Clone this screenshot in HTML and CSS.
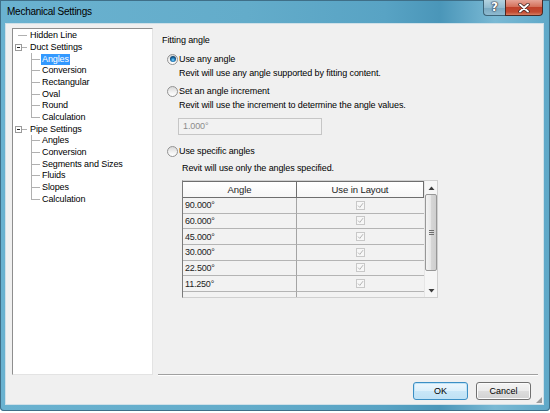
FILE: index.html
```html
<!DOCTYPE html>
<html>
<head>
<meta charset="utf-8">
<link rel="stylesheet" href="styles.css">
</head>
<body>
<div class="window">
  <div class="titlebar">
    <span class="title">Mechanical Settings</span>
    <div class="caption">
      <div class="cap-help">?</div>
      <div class="cap-close">
        <svg width="14" height="10" viewBox="0 0 14 10"><path d="M3 1.5 L11 8.5 M11 1.5 L3 8.5" stroke="#3a2020" stroke-width="3.4" stroke-linecap="round"/><path d="M3 1.5 L11 8.5 M11 1.5 L3 8.5" stroke="#fff" stroke-width="1.9" stroke-linecap="round"/></svg>
      </div>
    </div>
  </div>
  <div class="client">
    <div class="main">
      <div class="tree">
        <div class="trow root leaf"><span class="gut"></span><span class="lbl">Hidden Line</span></div>
        <div class="trow root"><span class="gut"><span class="exp"></span></span><span class="lbl">Duct Settings</span></div>
        <div class="trow child"><span class="gut"></span><span class="lbl sel">Angles</span></div>
        <div class="trow child"><span class="gut"></span><span class="lbl">Conversion</span></div>
        <div class="trow child"><span class="gut"></span><span class="lbl">Rectangular</span></div>
        <div class="trow child"><span class="gut"></span><span class="lbl">Oval</span></div>
        <div class="trow child"><span class="gut"></span><span class="lbl">Round</span></div>
        <div class="trow child last"><span class="gut"></span><span class="lbl">Calculation</span></div>
        <div class="trow root"><span class="gut"><span class="exp"></span></span><span class="lbl">Pipe Settings</span></div>
        <div class="trow child"><span class="gut"></span><span class="lbl">Angles</span></div>
        <div class="trow child"><span class="gut"></span><span class="lbl">Conversion</span></div>
        <div class="trow child"><span class="gut"></span><span class="lbl">Segments and Sizes</span></div>
        <div class="trow child"><span class="gut"></span><span class="lbl">Fluids</span></div>
        <div class="trow child"><span class="gut"></span><span class="lbl">Slopes</span></div>
        <div class="trow child last"><span class="gut"></span><span class="lbl">Calculation</span></div>
      </div>
      <div class="panel">
        <div class="heading">Fitting angle</div>
        <div class="opt o1"><span class="radio on"></span><span>Use any angle</span></div>
        <div class="desc">Revit will use any angle supported by fitting content.</div>
        <div class="opt o2"><span class="radio"></span><span>Set an angle increment</span></div>
        <div class="desc">Revit will use the increment to determine the angle values.</div>
        <div class="input">1.000°</div>
        <div class="opt o3"><span class="radio"></span><span>Use specific angles</span></div>
        <div class="desc d3">Revit will use only the angles specified.</div>
        <div class="grid">
          <div class="table">
            <div class="hrow">
              <div class="hcell c1">Angle</div>
              <div class="hcell c2">Use in Layout</div>
            </div>
            <div class="row"><div class="cell c1">90.000°</div><div class="cell c2"><span class="chk"><svg width="7" height="7" viewBox="0 0 7 7"><path d="M1 3.6 L2.8 5.4 L6 1.2" fill="none" stroke="#b4b4b4" stroke-width="1"/></svg></span></div></div>
            <div class="row"><div class="cell c1">60.000°</div><div class="cell c2"><span class="chk"><svg width="7" height="7" viewBox="0 0 7 7"><path d="M1 3.6 L2.8 5.4 L6 1.2" fill="none" stroke="#b4b4b4" stroke-width="1"/></svg></span></div></div>
            <div class="row"><div class="cell c1">45.000°</div><div class="cell c2"><span class="chk"><svg width="7" height="7" viewBox="0 0 7 7"><path d="M1 3.6 L2.8 5.4 L6 1.2" fill="none" stroke="#b4b4b4" stroke-width="1"/></svg></span></div></div>
            <div class="row"><div class="cell c1">30.000°</div><div class="cell c2"><span class="chk"><svg width="7" height="7" viewBox="0 0 7 7"><path d="M1 3.6 L2.8 5.4 L6 1.2" fill="none" stroke="#b4b4b4" stroke-width="1"/></svg></span></div></div>
            <div class="row"><div class="cell c1">22.500°</div><div class="cell c2"><span class="chk"><svg width="7" height="7" viewBox="0 0 7 7"><path d="M1 3.6 L2.8 5.4 L6 1.2" fill="none" stroke="#b4b4b4" stroke-width="1"/></svg></span></div></div>
            <div class="row"><div class="cell c1">11.250°</div><div class="cell c2"><span class="chk"><svg width="7" height="7" viewBox="0 0 7 7"><path d="M1 3.6 L2.8 5.4 L6 1.2" fill="none" stroke="#b4b4b4" stroke-width="1"/></svg></span></div></div>
            <div class="row partial"><div class="cell c1"></div><div class="cell c2"></div></div>
          </div>
          <div class="scroll">
            <div class="arrow up"><svg width="7" height="4" viewBox="0 0 7 4"><path d="M0.5 4 L3.5 0.5 L6.5 4 Z" fill="#3c3c3c"/></svg></div>
            <div class="thumb"><span class="grip"></span></div>
            <div class="track"></div>
            <div class="arrow down"><svg width="7" height="4" viewBox="0 0 7 4"><path d="M0.5 0 L3.5 3.5 L6.5 0 Z" fill="#3c3c3c"/></svg></div>
          </div>
        </div>
      </div>
    </div>
    <div class="footer">
      <button class="btn ok">OK</button>
      <button class="btn cancel">Cancel</button>
    </div>
    <div class="sizegrip"></div>
  </div>
</div>
</body>
</html>
```
FILE: styles.css
```css
html, body {
  margin: 0;
  padding: 0;
  background: #ffffff;
}
body {
  font-family: "Liberation Sans", Arial, sans-serif;
  font-size: 9px;
  color: #000;
}
.window {
  width: 550px;
  height: 411px;
  box-sizing: border-box;
  display: flex;
  flex-direction: column;
  background:
    linear-gradient(90deg, #6ab2d0 0%, #63acca 45%, #58a3c4 70%, #4a96b9 80%, #7ab9d4 90%, #5ea8c8 100%);
  box-shadow: inset 0 0 0 1px #3f6f88;
  border-radius: 0 0 4px 4px;
}
.titlebar {
  height: 23px;
  display: flex;
  align-items: flex-start;
  flex: none;
}
.title {
  padding: 6px 0 0 7px;
  line-height: 12px;
  font-size: 10px;
  letter-spacing: -0.25px;
  color: #000;
}
.caption {
  margin-left: auto;
  margin-right: 7px;
  display: flex;
}
.cap-help {
  width: 22px;
  height: 16px;
  box-sizing: border-box;
  border: 1px solid #3d6478;
  border-top: none;
  border-right: none;
  border-radius: 0 0 0 4px;
  background: linear-gradient(#b4d3e0, #93bcd0 50%, #7aa9c1 51%, #8fbad0);
  color: #fff;
  font-family: "DejaVu Sans", sans-serif;
  font-weight: bold;
  font-size: 12px;
  line-height: 15px;
  text-align: center;
  text-shadow: 0 0 1px #223, 0 0 1px #223, 0 0 2px #334;
}
.cap-close {
  width: 38px;
  height: 16px;
  box-sizing: border-box;
  border: 1px solid #4a2a24;
  border-top: none;
  border-radius: 0 0 4px 0;
  background: linear-gradient(#e6a497, #d4705a 45%, #c0412a 50%, #c24a30 80%, #d77e62);
  display: flex;
  align-items: center;
  justify-content: center;
}
.client {
  position: relative;
  flex: 1;
  margin: 0 6px 6px 5px;
  border: 1px solid #cfe0e8;
  background: #f0f0f0;
  padding: 4px 5px 0 6px;
  display: flex;
  flex-direction: column;
}
.main {
  display: flex;
  height: 348px;
  flex: none;
}
.tree {
  width: 141px;
  height: 347px;
  box-sizing: border-box;
  background: #fff;
  border: 1px solid;
  border-color: #8e8e8e #e3e3e3 #e3e3e3 #8e8e8e;
  padding-top: 1px;
}
.trow {
  display: flex;
  align-items: center;
  height: 11.67px;
  white-space: nowrap;
}
.gut {
  flex: none;
  height: 100%;
  display: flex;
  align-items: center;
  background-repeat: no-repeat;
}
.root .gut {
  width: 16px;
  background-image: linear-gradient(#b0b0b0, #b0b0b0);
  background-position: 9px 50%;
  background-size: 5px 1px;
}
.root.leaf .gut {
  background-position: 5px 50%;
  background-size: 9px 1px;
}
.exp {
  width: 7px;
  height: 7px;
  box-sizing: border-box;
  margin-left: 2px;
  border: 1px solid #9a9a9a;
  background: #fff linear-gradient(#222, #222) no-repeat center / 3px 1px;
}
.child .gut {
  width: 28px;
  background-image: linear-gradient(#b0b0b0, #b0b0b0), linear-gradient(#b0b0b0, #b0b0b0);
  background-position: 18px 0, 18px 50%;
  background-size: 1px 100%, 9px 1px;
}
.child.last .gut {
  background-size: 1px 50%, 9px 1px;
}
.lbl {
  padding: 0 1px;
  line-height: 11px;
  letter-spacing: -0.1px;
}
.sel {
  background: #3399ff;
  color: #fff;
}
.panel {
  flex: 1;
  margin-left: 5px;
  height: 347px;
  box-sizing: border-box;
  border-bottom: 1px solid #a0a0a0;
  box-shadow: 0 1px 0 #fff;
  padding-left: 4px;
  display: flex;
  flex-direction: column;
  letter-spacing: -0.1px;
}
.heading {
  margin-top: 6px;
  line-height: 12px;
}
.opt {
  display: flex;
  align-items: center;
  height: 12px;
  padding-left: 5px;
}
.o1 { margin-top: 7px; }
.o2 { margin-top: 6px; }
.o3 { margin-top: 10px; }
.radio {
  width: 11px;
  height: 11px;
  box-sizing: border-box;
  border-radius: 50%;
  border: 1px solid #939393;
  background: linear-gradient(#d9d9d9, #f6f6f6 70%, #ffffff);
  margin-right: 1px;
  display: flex;
  align-items: center;
  justify-content: center;
  flex: none;
}
.radio.on::before {
  content: "";
  width: 6px;
  height: 6px;
  border-radius: 50%;
  background: radial-gradient(circle at 50% 65%, #8fdcff 0, #2d8fcf 1.4px, #134a78 3px);
}
.desc {
  margin-top: 2px;
  line-height: 12px;
  padding-left: 17px;
}
.desc.d3 {
  margin-top: 5px;
  padding-left: 20px;
}
.input {
  margin-top: 7px;
  margin-left: 16px;
  width: 144px;
  height: 17px;
  box-sizing: border-box;
  border: 1px solid #c6c6c6;
  background: #f2f2f2;
  color: #8c8c8c;
  padding-left: 4px;
  line-height: 15px;
}
.grid {
  margin-top: 6px;
  margin-left: 20px;
  width: 256px;
  height: 118px;
  box-sizing: border-box;
  border: 1px solid #cfcfcf;
  border-left-color: #7a7a7a;
  display: flex;
}
.table {
  width: 241px;
  display: flex;
  flex-direction: column;
}
.hrow {
  display: flex;
  height: 17px;
  box-sizing: border-box;
  flex: none;
}
.hcell {
  box-sizing: border-box;
  height: 17px;
  border: 1px solid #6e6e6e;
  border-left: none;
  background: linear-gradient(#ffffff, #f6f6f6);
  font-size: 9.5px;
  line-height: 15px;
  text-align: center;
  color: #222;
}
.c1 { width: 114px; }
.c2 { width: 127px; }
.row {
  display: flex;
  height: 15.67px;
  flex: none;
}
.row.partial {
  flex: 1;
  height: auto;
}
.cell {
  box-sizing: border-box;
  border-bottom: 1px solid #b4b4b4;
  background: #f2f2f2;
  display: flex;
  align-items: center;
}
.row.partial .cell {
  border-bottom: none;
}
.cell.c1 {
  border-right: 1px solid #a4a4a4;
  padding-left: 2px;
  font-size: 9px;
  letter-spacing: -0.2px;
  color: #222;
}
.cell.c2 {
  justify-content: center;
}
.chk {
  width: 9px;
  height: 9px;
  box-sizing: border-box;
  border: 1px solid #c8c8c8;
  background: #f7f7f7;
  display: flex;
  align-items: center;
  justify-content: center;
}
.scroll {
  width: 14px;
  display: flex;
  flex-direction: column;
  background: #f6f6f6;
  border-left: 1px solid #e6e6e6;
}
.arrow {
  height: 13px;
  display: flex;
  align-items: center;
  justify-content: center;
  flex: none;
}
.thumb {
  height: 77px;
  margin: 0 0 0 0;
  box-sizing: border-box;
  border: 1px solid #979797;
  border-radius: 2px;
  background: linear-gradient(90deg, #f3f3f3, #e6e6e6 50%, #d6d6d6 51%, #cfcfcf);
  display: flex;
  align-items: center;
  justify-content: center;
  flex: none;
}
.grip {
  width: 5px;
  height: 5px;
  background: repeating-linear-gradient(#6e6e6e 0, #6e6e6e 1px, transparent 1px, transparent 2px);
}
.track {
  flex: 1;
}
.footer {
  display: flex;
  justify-content: flex-end;
  gap: 8px;
  padding: 6px 7px 0 0;
}
.btn {
  width: 55px;
  height: 18px;
  box-sizing: border-box;
  border-radius: 3px;
  font-family: "Liberation Sans", Arial, sans-serif;
  font-size: 9px;
  color: #000;
  padding: 0;
  margin: 0;
}
.ok {
  border: 1px solid #3c8fc4;
  background: linear-gradient(#eef7fd, #dcf0fb 50%, #c9e7f8 51%, #bfe1f4);
  box-shadow: inset 0 0 0 1px #bfe3f7;
}
.cancel {
  border: 1px solid #707070;
  background: linear-gradient(#f4f4f4, #ebebeb 50%, #dddddd 51%, #d2d2d2);
  box-shadow: inset 0 0 0 1px #fbfbfb;
}
.sizegrip {
  position: absolute;
  right: 1px;
  bottom: 1px;
  width: 6px;
  height: 6px;
  background:
    radial-gradient(circle, #9a9a9a 0.7px, transparent 0.9px) 0 0 / 2px 2px;
  clip-path: polygon(100% 0, 100% 100%, 0 100%);
}
```
